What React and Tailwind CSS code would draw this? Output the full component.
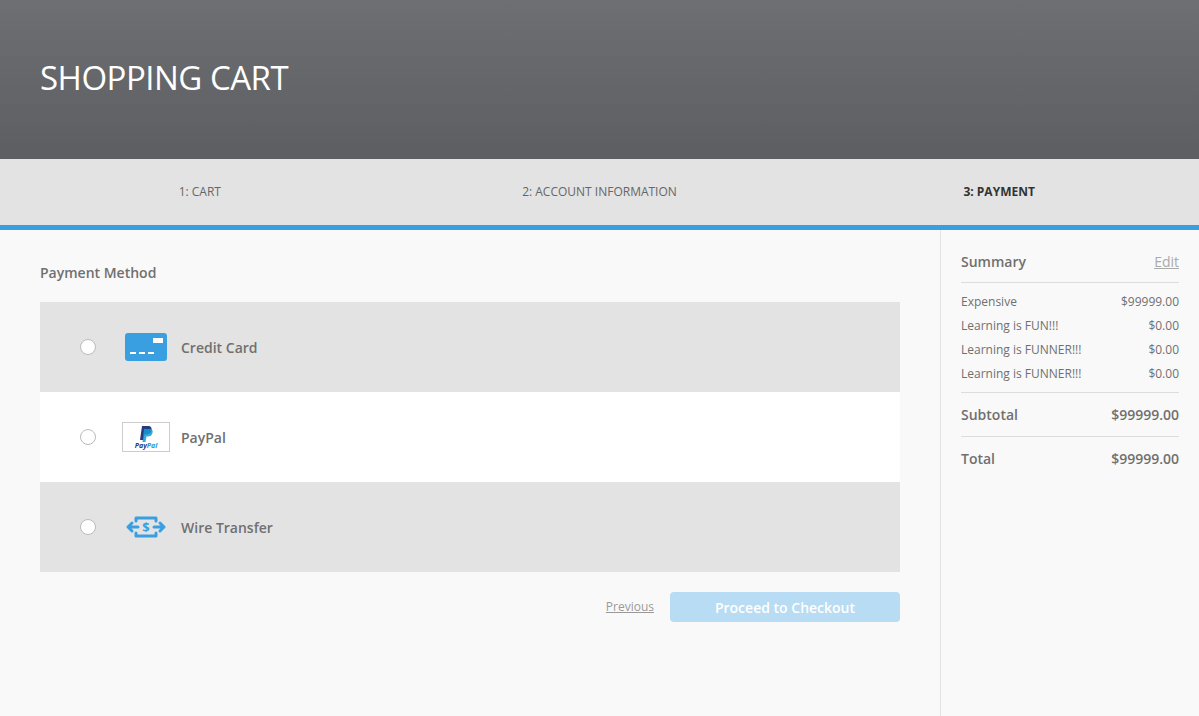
import React, { useState } from "react";

const items = [
  ["Expensive", "$99999.00"],
  ["Learning is FUN!!!", "$0.00"],
  ["Learning is FUNNER!!!", "$0.00"],
  ["Learning is FUNNER!!!", "$0.00"],
];

function CardIcon() {
  return (
    <svg width="42" height="28" viewBox="0 0 42 28">
      <rect width="42" height="28" rx="3" fill="#3a9fe0" />
      <rect x="28" y="5" width="10" height="5" fill="#fff" />
      <rect x="5" y="19" width="6" height="2" fill="#fff" />
      <rect x="14" y="19" width="6" height="2" fill="#fff" />
      <rect x="23" y="19" width="6" height="2" fill="#fff" />
    </svg>
  );
}

function PaypalIcon() {
  return (
    <div className="w-[48px] h-[30px] border border-[#ccc] bg-white flex flex-col items-center justify-center">
      <svg width="14" height="16" viewBox="0 0 14 16">
        <path d="M3 0h6c3 0 4 2 3.5 4.5C12 7 10 8.5 7.5 8.5H5.5L4.5 14H1z" fill="#253b80" />
        <path d="M5 3h6c2.5 0 3 2 2.5 4C13 9.5 11 10.5 9 10.5H7.5L6.5 16H3.5z" fill="#179bd7" opacity="0.85" />
      </svg>
      <span className="text-[7px] leading-none font-bold italic text-[#253b80]">Pay<span className="text-[#179bd7]">Pal</span></span>
    </div>
  );
}

function WireIcon() {
  return (
    <svg width="42" height="22" viewBox="0 0 42 22">
      <g fill="none" stroke="#3a9fe0" strokeWidth="3" strokeLinejoin="round" strokeLinecap="round">
        <path d="M11 5V2h20v3M11 17v3h20v-3" />
        <path d="M3 11h10M7 7l-4 4 4 4" />
        <path d="M29 11h10M35 7l4 4-4 4" />
      </g>
      <text x="21" y="16" textAnchor="middle" fontSize="13" fontWeight="700" fill="#3a9fe0" fontFamily="Open Sans">$</text>
    </svg>
  );
}

const methods = [
  { name: "Credit Card", icon: <CardIcon />, bg: "bg-[#e3e3e3]" },
  { name: "PayPal", icon: <PaypalIcon />, bg: "bg-white" },
  { name: "Wire Transfer", icon: <WireIcon />, bg: "bg-[#e3e3e3]" },
];

export default function App() {
  const [sel, setSel] = useState(null);
  return (
    <div className="min-h-[716px] bg-[#f9f9f9] text-[#707070] flex flex-col" style={{ fontFamily: '"Open Sans", sans-serif' }}>
      <div className="h-[159px] bg-gradient-to-b from-[#6d6f72] to-[#5c5e61] flex items-center px-10">
        <h1 className="text-white text-[33px] tracking-[-0.5px] pb-1">SHOPPING CART</h1>
      </div>
      <div className="h-[66px] bg-[#e3e3e3] grid grid-cols-3 items-center text-center text-[12px] text-[#666]">
        <div>1: CART</div>
        <div>2: ACCOUNT INFORMATION</div>
        <div className="font-bold text-[#333]">3: PAYMENT</div>
      </div>
      <div className="h-[5px] bg-[#3a9fe0]" />
      <div className="flex flex-1">
        <div className="flex-1 px-10 pt-[32px]">
          <h2 className="text-[14px] font-semibold text-[#707070] mb-[19px]">Payment Method</h2>
          <div>
            {methods.map((m, i) => (
              <label key={m.name} className={`${m.bg} h-[90px] flex items-center cursor-pointer`}>
                <input type="radio" name="pm" checked={sel === i} onChange={() => setSel(i)} className="hidden" />
                <span className="ml-10 w-[16px] h-[16px] rounded-full border border-[#bbb] bg-white" />
                <span className="ml-[25px] w-[50px] flex justify-center">{m.icon}</span>
                <span className="ml-[10px] text-[14px] font-semibold text-[#707070]">{m.name}</span>
              </label>
            ))}
          </div>
          <div className="flex justify-end items-center gap-4 mt-[20px]">
            <a className="text-[12px] underline text-[#999] cursor-pointer">Previous</a>
            <button className="w-[230px] h-[30px] rounded bg-[#b8dcf3] text-white text-[14px] font-semibold">Proceed to Checkout</button>
          </div>
        </div>
        <div className="w-[259px] border-l border-[#e3e3e3] px-5 pt-[21px] text-[12px]">
          <div className="flex justify-between items-center pb-[10px] border-b border-[#ddd]">
            <span className="text-[14px] font-semibold">Summary</span>
            <a className="text-[14px] underline text-[#aaa]">Edit</a>
          </div>
          <div className="pt-[10px] pb-[10px] border-b border-[#ddd] space-y-[7px]">
            {items.map(([n, p], i) => (
              <div key={i} className="flex justify-between leading-[17px]"><span>{n}</span><span>{p}</span></div>
            ))}
          </div>
          <div className="flex justify-between py-[11px] border-b border-[#ddd] text-[14px] font-semibold">
            <span>Subtotal</span><span>$99999.00</span>
          </div>
          <div className="flex justify-between py-[11px] text-[14px] font-semibold">
            <span>Total</span><span>$99999.00</span>
          </div>
        </div>
      </div>
    </div>
  );
}
